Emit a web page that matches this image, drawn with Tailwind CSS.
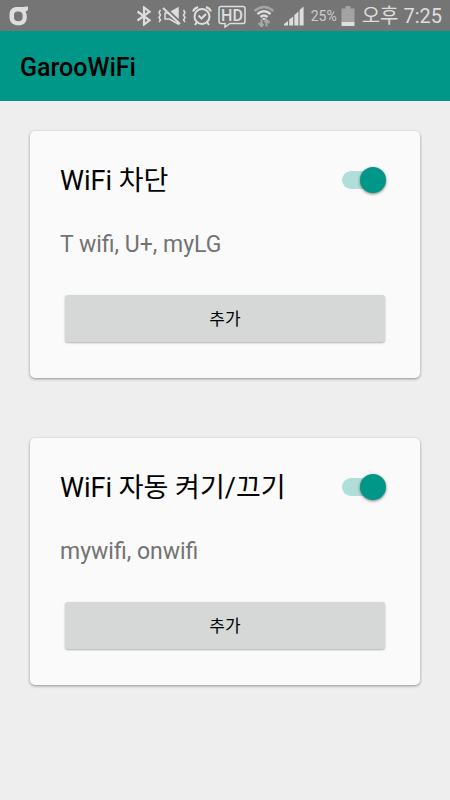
<!DOCTYPE html>
<html lang="ko">
<head>
    <meta charset="UTF-8">
    <meta name="viewport" content="width=device-width, initial-scale=1.0">
    <title>GarooWiFi</title>
    <script src="https://cdn.jsdelivr.net/npm/@tailwindcss/browser@4"></script>
</head>
<body class="min-h-screen bg-[#eeeeee] font-[Roboto,'Noto_Sans_CJK_KR',sans-serif] text-black antialiased">
    <!-- Status bar -->
    <div class="flex h-[31px] items-center justify-between bg-[#757575] pr-2 pl-2 text-[#dedede]">
        <svg class="h-5 w-5" viewBox="0 0 20 20" fill="currentColor">
            <path fill-rule="evenodd" d="M20 0.500V3Q20 5 17.500 5.500Q18.800 7.500 18.800 11C18.800 16.500 16 19.300 10.500 19.300S1.500 16.500 1.500 11V9C1.500 3.500 4.500 1 9.500 1H14Q17 1 17.500 0.500ZM10.300 5.500C7 5.500 6 7 6 9.500V11.500C6 14 7.500 15.300 10.300 15.300S14.600 14 14.600 11.500V9.500C14.600 7 13.500 5.500 10.300 5.500Z"/>
        </svg>
        <div class="flex items-center">
            <!-- Bluetooth -->
            <svg class="mr-1.5 h-5 w-4" viewBox="0 0 16 20" fill="none" stroke="currentColor" stroke-width="2.200">
                <path d="M1.500 5.500L13.500 14.300L8 18.500V1.500L13.500 5.700L1.500 14.500"/>
            </svg>
            <!-- Vibrate / muted -->
            <svg class="mr-1.5 h-5 w-7" viewBox="0 0 28 20" fill="none" stroke="currentColor">
                <path stroke-width="1.500" d="M2.500 4L1 6.500L2.500 9L1 11.500L2.500 14L1 16M25.500 4L27 6.500L25.500 9L27 11.500L25.500 14L27 16"/>
                <path stroke-width="1.500" d="M7 7V13H11.500L20 18V2L11.500 7Z"/>
                <path fill="currentColor" stroke="none" d="M12 7L20 2V14Z"/>
                <path stroke="#757575" stroke-width="2" d="M7 1.500L23 16.500"/>
                <path stroke-width="2" d="M5 2L22 18"/>
            </svg>
            <!-- Alarm -->
            <svg class="mr-1.5 h-5 w-5" viewBox="0 0 20 20" fill="none" stroke="currentColor" stroke-width="2">
                <circle cx="10" cy="10.500" r="7.500"/>
                <path d="M6.500 9.500L9.500 12.500L14 8"/>
                <path d="M1 5.500Q2 2.500 6 1M19 5.500Q18 2.500 14 1M5 16L3 19M15 16L17 19"/>
            </svg>
            <!-- HD voice -->
            <svg class="mr-1.5 h-6 w-7" viewBox="0 0 28 24">
                <path fill="none" stroke="currentColor" stroke-width="1.500" d="M3 2.500H25Q27 2.500 27 4.500V17.500Q27 19.500 25 19.500H12L7 23V19.500H3Q1 19.500 1 17.500V4.500Q1 2.500 3 2.500Z"/>
                <text x="14" y="17" text-anchor="middle" fill="currentColor" class="text-[16px] font-medium">HD</text>
            </svg>
            <!-- WiFi -->
            <svg class="mr-2 h-6 w-6" viewBox="0 0 24 24" fill="none">
                <path stroke="#a3a3a3" stroke-width="2.500" d="M2.500 7Q12 -1 21.500 7"/>
                <path stroke="currentColor" stroke-width="2.500" d="M5.500 10Q12 4.500 18.500 10M8.500 13Q12 10 15.500 13"/>
                <path fill="currentColor" d="M10 14.500Q12 13 14 14.500L12 16.500Z"/>
                <path stroke="#a9a9a9" stroke-width="2" d="M9.500 15.500V22M6.500 19L9.500 22L11.500 20M14.500 22.500V16M12.500 18L14.500 16L17.500 19"/>
            </svg>
            <!-- Signal -->
            <svg class="mr-[7px] h-5 w-5" viewBox="0 0 20 20" fill="currentColor">
                <path d="M0 19.500V18L4 15V19.500ZM5.200 19.500V13.500L9.200 10.500V19.500ZM10.400 19.500V9L14.400 5.500V19.500ZM15.600 19.500V4L19.600 0.500V19.500Z"/>
            </svg>
            <span class="mr-1 text-[14px] leading-5 text-[#cccccc]">25%</span>
            <!-- Battery -->
            <svg class="mr-[7px] h-5 w-3.5" viewBox="0 0 14 20">
                <path fill="#a3a3a3" d="M4.500 0H9.500V2.500H13.500V16H0.500V2.500H4.500Z"/>
                <path fill="#dedede" d="M0.500 16H13.500V20H0.500Z"/>
            </svg>
            <span class="text-[20px] leading-6">오후 7:25</span>
        </div>
    </div>

    <!-- App bar -->
    <header class="flex h-[70px] items-center bg-[#009688] px-5 pt-1">
        <h1 class="text-[25px] leading-8 font-medium">GarooWiFi</h1>
    </header>

    <main class="flex flex-col gap-[60px] p-[30px]">
        <!-- Blocked networks -->
        <section class="rounded-[5px] bg-[#fafafa] px-[30px] pt-[30px] pb-9 shadow-[0_1px_3px_rgba(0,0,0,0.4)]">
            <div class="flex items-start justify-between pr-1">
                <h2 id="block-title" class="text-[27px] leading-10">WiFi 차단</h2>
                <label class="relative mt-1.5 flex h-[26px] w-11 items-center">
                    <input type="checkbox" role="switch" aria-labelledby="block-title" checked class="peer h-[18px] w-10 appearance-none rounded-full bg-[#b0b0b0] checked:bg-[#b0dfda]">
                    <span class="absolute left-0 size-[26px] rounded-full bg-[#f1f1f1] shadow-[0_1px_3px_rgba(0,0,0,0.5)] peer-checked:right-0 peer-checked:left-auto peer-checked:bg-[#009688]"></span>
                </label>
            </div>
            <p class="mt-7 text-[23px] leading-8 text-[#737373]">T wifi, U+, myLG</p>
            <div class="mt-[34px] pr-[5px] pl-[5px]">
                <button type="button" class="block h-[47px] w-full rounded-[3px] bg-[#d6d8d7] pt-0.5 text-[17px] shadow-[0_1px_2px_rgba(0,0,0,0.3)]">추가</button>
            </div>
        </section>

        <!-- Auto on/off networks -->
        <section class="rounded-[5px] bg-[#fafafa] px-[30px] pt-[30px] pb-9 shadow-[0_1px_3px_rgba(0,0,0,0.4)]">
            <div class="flex items-start justify-between pr-1">
                <h2 id="auto-title" class="text-[27px] leading-10">WiFi 자동 켜기/끄기</h2>
                <label class="relative mt-1.5 flex h-[26px] w-11 items-center">
                    <input type="checkbox" role="switch" aria-labelledby="auto-title" checked class="peer h-[18px] w-10 appearance-none rounded-full bg-[#b0b0b0] checked:bg-[#b0dfda]">
                    <span class="absolute left-0 size-[26px] rounded-full bg-[#f1f1f1] shadow-[0_1px_3px_rgba(0,0,0,0.5)] peer-checked:right-0 peer-checked:left-auto peer-checked:bg-[#009688]"></span>
                </label>
            </div>
            <p class="mt-7 text-[23px] leading-8 text-[#737373]">mywifi, onwifi</p>
            <div class="mt-[34px] pr-[5px] pl-[5px]">
                <button type="button" class="block h-[47px] w-full rounded-[3px] bg-[#d6d8d7] pt-0.5 text-[17px] shadow-[0_1px_2px_rgba(0,0,0,0.3)]">추가</button>
            </div>
        </section>
    </main>
</body>
</html>
